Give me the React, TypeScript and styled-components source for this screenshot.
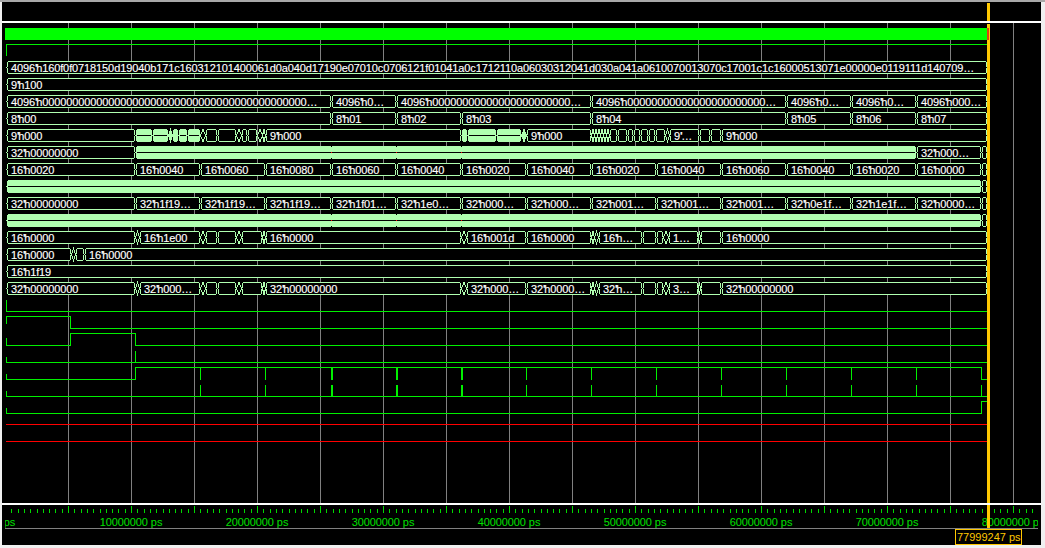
import React from "react";
import styled, { createGlobalStyle } from "styled-components";

const Global = createGlobalStyle`
  html, body { margin: 0; padding: 0; background: #f0f0f0; }
  body { font-family: "Liberation Sans", Arial, sans-serif; }
`;

const Window = styled.div`
  width: 1045px;
  height: 548px;
  box-sizing: border-box;
  padding: 2px 4px 3px 2px;
  background: linear-gradient(#a8a8a8 0 2px, #f0f0f0 2px);
  overflow: hidden;
`;
const Frame = styled.div`
  display: flex;
  flex-direction: column;
  height: 543px;
  background: #000;
`;
const TopBand = styled.div`
  position: relative;
  height: 19px;
  flex: none;
`;
const Divider = styled.div`
  height: 2px;
  flex: none;
  background: #fff;
`;
const WavePanel = styled.div`
  position: relative;
  height: 480px;
  flex: none;
`;
const RulerPanel = styled.div`
  position: relative;
  height: 40px;
  flex: none;
`;
const Drawing = styled.svg`
  display: block;
  shape-rendering: crispEdges;
`;
const Cursor = styled.div<{ $top: number; $height: number; $color?: string; $width?: number }>`
  position: absolute;
  left: 985px;
  width: ${(p) => p.$width ?? 3}px;
  top: ${(p) => p.$top}px;
  height: ${(p) => p.$height}px;
  background: ${(p) => p.$color ?? "#ffc800"};
`;
const TimeBadge = styled.div`
  position: absolute;
  left: 953px;
  top: 24px;
  width: 67px;
  height: 16px;
  box-sizing: border-box;
  border: 1px solid #ffc800;
  background: #000;
  color: #ffc800;
  font-size: 11px;
  line-height: 14px;
  padding-left: 1px;
  white-space: nowrap;
  overflow: hidden;
`;
const GridLine = styled.line`
  stroke: #808080;
  stroke-width: 1;
`;
const CellShape = styled.polygon<{ $filled?: boolean }>`
  fill: ${(p) => (p.$filled ? "#b0ffb0" : "#000")};
  stroke: #b0ffb0;
  stroke-width: 1;
`;
const MidLine = styled.line`
  stroke: #000;
  stroke-width: 1;
`;
const Value = styled.text`
  fill: #fff;
  stroke: #fff;
  stroke-width: 0.15px;
  font-family: "Liberation Sans", Arial, sans-serif;
  font-size: 11px;
  letter-spacing: -0.11px;
  white-space: pre;
  shape-rendering: auto;
`;
const Tickmark = styled.tspan`
  font-weight: 700;
`;
const Trace = styled.polyline<{ $color?: string }>`
  fill: none;
  stroke: ${(p) => p.$color ?? "#00f000"};
  stroke-width: 1;
`;
const Pulse = styled.rect`
  fill: #00f000;
`;
const Block = styled.rect`
  fill: #00ff00;
`;
const Dot = styled.rect<{ $color: string }>`
  fill: ${(p) => p.$color};
`;
const Tick = styled.line`
  stroke: #00d800;
  stroke-width: 1;
`;
const Label = styled.text`
  fill: #00e000;
  font-family: "Liberation Sans", Arial, sans-serif;
  font-size: 11px;
  letter-spacing: -0.09px;
  text-anchor: middle;
  shape-rendering: auto;
`;
const Rule = styled.line`
  stroke: #808080;
  stroke-width: 1;
`;

type Cell = { a: number; b: number; t?: string; f?: boolean };
type Row = { top: number; cells: Cell[] };

const c = (a: number, b: number, t?: string): Cell => ({ a, b, t });
const f = (a: number, b: number): Cell => ({ a, b, f: true });
const seq = (points: number[]): Cell[] => points.slice(0, -1).map((a, i) => c(a, points[i + 1]));
const fills = (points: number[]): Cell[] => points.slice(0, -1).map((a, i) => f(a, points[i + 1]));

const Z = (n: number) => "0".repeat(n);
const beat = [135, 200, 265, 331, 396, 461, 526, 591, 656, 721, 786, 851, 916, 981, 987];

const longHex =
  "4096'h160f0f0718150d19040b171c160312101400061d0a040d17190e07010c0706121f01041a0c1712110a06030312041d030a041a0610070013070c17001c1c16000513071e00000e0119111d140709…";

const sparse = (p: string, first: string, mid1: string, mid2: string, mid3: string, rest: string): Cell[] => [
  c(6, 135, rest),
  c(135, 139),
  c(139, 200, first),
  ...seq([200, 205, 217, 236, 241, 262, 265]),
  c(265, 461, rest),
  c(461, 466),
  c(466, 526, mid1),
  c(526, 591, p),
  ...seq([591, 594, 598]),
  c(598, 642, mid2),
  ...seq([642, 656, 663, 668]),
  c(668, 698, mid3),
  ...seq([698, 700, 721]),
  c(721, 987, rest),
];

const rows: Row[] = [
  { top: 61, cells: [c(6, 987, longHex)] },
  { top: 78, cells: [c(6, 987, "9'h100")] },
  {
    top: 95,
    cells: [
      c(6, 331, `4096'h${Z(44)}…`),
      c(331, 396, "4096'h0…"),
      c(396, 591, `4096'h${Z(23)}…`),
      c(591, 786, `4096'h${Z(23)}…`),
      c(786, 851, "4096'h0…"),
      c(851, 916, "4096'h0…"),
      c(916, 987, "4096'h000…"),
    ],
  },
  {
    top: 112,
    cells: [
      c(6, 331, "8'h00"),
      c(331, 396, "8'h01"),
      c(396, 461, "8'h02"),
      c(461, 591, "8'h03"),
      c(591, 786, "8'h04"),
      c(786, 851, "8'h05"),
      c(851, 916, "8'h06"),
      c(916, 987, "8'h07"),
    ],
  },
  {
    top: 129,
    cells: [
      c(6, 135, "9'h000"),
      ...fills([135, 152, 168, 172, 178, 187, 200]),
      ...seq([200, 205, 217, 236, 241, 247, 257, 262, 265]),
      c(265, 461, "9'h000"),
      ...fills([461, 467, 496, 521, 526]),
      c(526, 591, "9'h000"),
      ...seq([591, 594, 597, 600, 603, 606, 609, 617, 627, 633, 640, 648, 655, 665, 669]),
      c(669, 699, "9'…"),
      ...seq([699, 710, 721]),
      c(721, 987, "9'h000"),
    ],
  },
  { top: 146, cells: [c(6, 135, "32'h00000000"), f(135, 916), c(916, 981, "32'h000…"), c(981, 987)] },
  {
    top: 163,
    cells: ["0020", "0040", "0060", "0080", "0060", "0040", "0020", "0040", "0020", "0040", "0060", "0040", "0020", "0000"]
      .map((v, i) => c(i === 0 ? 6 : beat[i - 1], beat[i], `16'h${v}`))
      .concat([c(981, 987)]),
  },
  { top: 180, cells: [f(6, 981), c(981, 987)] },
  {
    top: 197,
    cells: ["00000000", "1f19…", "1f19…", "1f19…", "1f01…", "1e0…", "000…", "000…", "001…", "001…", "001…", "0e1f…", "1e1f…", "0000…"]
      .map((v, i) => c(i === 0 ? 6 : beat[i - 1], beat[i], `32'h${v}`))
      .concat([c(981, 987)]),
  },
  { top: 214, cells: [f(6, 981), c(981, 987)] },
  { top: 231, cells: sparse("16'h0000", "16'h1e00", "16'h001d", "16'h…", "1…", "16'h0000") },
  { top: 248, cells: [c(6, 71, "16'h0000"), c(71, 75), c(75, 84), c(84, 987, "16'h0000")] },
  { top: 265, cells: [c(6, 987, "16'h1f19")] },
  { top: 282, cells: sparse("32'h0000…", "32'h000…", "32'h000…", "32'h…", "3…", "32'h00000000") },
];

const gridXs = Array.from({ length: 16 }, (_, i) => 68 + 63 * i);
const pulseXs = [200, 265, 331, 396, 461, 526, 591, 656, 721, 786, 851, 916, 981];
const wide = new Set([331, 396, 461]);
const flecks = [331, 396, 461];

const cellPoints = (a: number, b: number, top: number) => {
  const bottom = top + 12;
  const mid = top + 6;
  const p = (x: number, y: number) => `${x + 0.5},${y + 0.5}`;
  if (b - a < 6) {
    const ch = (b - a) / 2;
    return [p(a, mid), p(a + ch, top), p(b - ch, top), p(b, mid), p(b - ch, bottom), p(a + ch, bottom)].join(" ");
  }
  return [
    p(a, mid),
    p(a + 1, mid - 1),
    p(a + 1, top + 1),
    p(a + 2, top),
    p(b - 2, top),
    p(b - 1, top + 1),
    p(b - 1, mid - 1),
    p(b, mid),
    p(b - 1, mid + 1),
    p(b - 1, bottom - 1),
    p(b - 2, bottom),
    p(a + 2, bottom),
    p(a + 1, bottom - 1),
    p(a + 1, mid + 1),
  ].join(" ");
};

const ValueText = ({ x, y, text }: { x: number; y: number; text: string }) => {
  const at = text.indexOf("'");
  if (at < 0) {
    return (
      <Value x={x} y={y}>
        {text}
      </Value>
    );
  }
  return (
    <Value x={x} y={y}>
      {text.slice(0, at)}
      <Tickmark>'</Tickmark>
      <tspan dx={-1.4}>{text.slice(at + 1)}</tspan>
    </Value>
  );
};

const BusRow = ({ row }: { row: Row }) => (
  <g>
    {row.cells.map((cell) => (
      <g key={cell.a}>
        <CellShape points={cellPoints(cell.a, cell.b, row.top)} $filled={cell.f} />
        {cell.f && cell.b - cell.a > 6 && (
          <MidLine x1={cell.a + 2} x2={cell.b - 1} y1={row.top + 6.5} y2={row.top + 6.5} />
        )}
        {cell.t && <ValueText x={cell.a + 5} y={row.top + 11} text={cell.t} />}
      </g>
    ))}
  </g>
);

const Waves = () => (
  <Drawing width={1039} height={480} viewBox="2 23 1039 480">
    {gridXs.map((x) => (
      <GridLine key={x} x1={x + 0.5} x2={x + 0.5} y1={23} y2={503} />
    ))}

    <Block x={5} y={28} width={982} height={12} />
    <Trace points="6.5,56 6.5,44.5 987,44.5" />

    {rows.map((row) => (
      <BusRow key={row.top} row={row} />
    ))}

    {flecks.map((x) => (
      <g key={x}>
        <Dot $color="#000" x={x} y={145} width={1} height={2} />
        <Dot $color="#ff0000" x={x} y={152} width={1} height={1} />
        <Dot $color="#000" x={x} y={158} width={1} height={2} />
        <Dot $color="#000" x={x} y={213} width={1} height={2} />
        <Dot $color="#ff0000" x={x} y={220} width={1} height={1} />
        <Dot $color="#000" x={x} y={226} width={1} height={2} />
      </g>
    ))}

    <Trace points="6.5,300 6.5,311.5 987,311.5" />
    <Trace points="6.5,324 6.5,316.5 70.5,316.5 70.5,328.5 987,328.5" />
    <Trace points="6.5,338 6.5,345.5 70.5,345.5 70.5,333.5 135.5,333.5 135.5,345.5 987,345.5" />
    <Trace points="6.5,357 6.5,362.5 987,362.5" />
    <Trace points="135.5,351 135.5,362.5" />
    <Trace points="6.5,374 6.5,379.5 135.5,379.5 135.5,367.5 981.5,367.5 981.5,379.5 987,379.5" />
    <Trace points="6.5,391 6.5,396.5 987,396.5" />
    <Trace points="6.5,408 6.5,413.5 981.5,413.5 981.5,401.5 987,401.5" />
    {pulseXs.map((x) => (
      <g key={x}>
        <Pulse x={x} y={367} width={wide.has(x) ? 2 : 1} height={13} />
        <Pulse x={x} y={385} width={wide.has(x) ? 2 : 1} height={12} />
      </g>
    ))}
    <Trace $color="#ff0000" points="6,424.5 987,424.5" />
    <Trace $color="#ff0000" points="6,441.5 987,441.5" />
  </Drawing>
);

const minorTicks = Array.from({ length: 163 }, (_, i) => i - 9);
const labels = [0, 1, 2, 3, 4, 5, 6, 7, 8];

const Ruler = () => (
  <Drawing width={1039} height={40} viewBox="2 505 1039 40">
    <defs>
      <clipPath id="ruler-clip">
        <rect x={5} y={505} width={1033} height={23} />
      </clipPath>
    </defs>
    {minorTicks.map((i) => {
      const x = Math.round(68 + 6.3 * i);
      const major = i % 10 === 0;
      return <Tick key={i} x1={x + 0.5} x2={x + 0.5} y1={major ? 506 : 509} y2={513} />;
    })}
    <g clipPath="url(#ruler-clip)">
      {labels.map((n) => (
        <Label key={n} x={5 + 126 * n} y={526}>
          {n === 0 ? "0 ps" : `${n}0000000 ps`}
        </Label>
      ))}
    </g>
    <Rule x1={5} x2={1038} y1={528.5} y2={528.5} />
  </Drawing>
);

export default function App() {
  return (
    <Window>
      <Global />
      <Frame>
        <TopBand>
          <Cursor $top={1} $height={18} />
        </TopBand>
        <Divider />
        <WavePanel>
          <Waves />
          <Cursor $top={1} $height={479} />
          <Cursor $top={5} $height={12} $color="#e04010" $width={2} />
        </WavePanel>
        <Divider />
        <RulerPanel>
          <Ruler />
          <Cursor $top={0} $height={23} />
          <TimeBadge>77999247 ps</TimeBadge>
        </RulerPanel>
      </Frame>
    </Window>
  );
}
